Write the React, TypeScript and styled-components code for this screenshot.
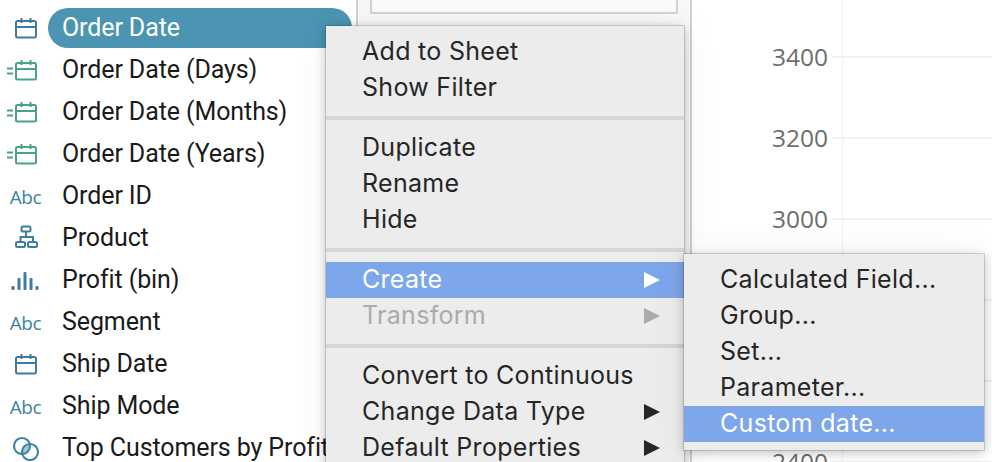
import React from "react";
import styled, { createGlobalStyle } from "styled-components";

const Global = createGlobalStyle`
  html, body { margin: 0; padding: 0; background: #fff; overflow: hidden; }
  #root { width: 992px; height: 462px; }
`;

const Page = styled.div`
  position: relative;
  width: 992px;
  height: 462px;
  overflow: hidden;
  display: flex;
  background: #fff;
`;

const Sidebar = styled.div`
  width: 356px;
  flex: none;
  display: flex;
  flex-direction: column;
  padding-top: 7px;
  box-sizing: border-box;
`;

const Row = styled.div`
  height: 42px;
  flex: none;
  display: flex;
  align-items: center;
`;

const IconSlot = styled.div`
  width: 48px;
  height: 42px;
  flex: none;
  box-sizing: border-box;
  padding: 0 10px 2px 0;
  display: flex;
  align-items: center;
  justify-content: flex-end;
  color: #3d7d9e;
`;

const AbcLabel = styled.span`
  font-family: "Open Sans", "Liberation Sans", sans-serif;
  font-size: 19px;
  letter-spacing: -0.5px;
  color: #3f81a3;
  margin: 4px -3px 0 0;
`;

const FieldName = styled.div<{ $selected?: boolean }>`
  flex: 1;
  height: 40px;
  display: flex;
  align-items: center;
  padding: 0 0 2px 14px;
  box-sizing: border-box;
  border-radius: 20px;
  white-space: nowrap;
  font-family: Roboto, "Liberation Sans", sans-serif;
  font-size: 25px;
  letter-spacing: -0.1px;
  color: ${(p) => (p.$selected ? "#fff" : "#1a1a1a")};
  background: ${(p) => (p.$selected ? "#4b95b2" : "transparent")};
  margin-right: ${(p) => (p.$selected ? "4px" : "0")};
`;

const Middle = styled.div`
  width: 336px;
  flex: none;
  box-sizing: border-box;
  background: #f8f8f8;
  border-left: 2px solid #d2d2d2;
  border-right: 2px solid #d2d2d2;
  padding: 0 12px;
`;

const DropCard = styled.div`
  height: 14px;
  box-sizing: border-box;
  background: #fbfbfb;
  border: 2px solid #d2d2d2;
  border-top: none;
`;

const Chart = styled.div`
  flex: 1;
  position: relative;
  display: flex;
  flex-direction: column;
  padding-top: 16px;
  background: #fff;
`;

const AxisLine = styled.div`
  position: absolute;
  left: 150px;
  top: 0;
  bottom: 0;
  width: 1px;
  background: #f1f1f1;
`;

const AxisRow = styled.div`
  height: 81px;
  flex: none;
  display: flex;
  align-items: center;
`;

const AxisLabel = styled.div`
  width: 136px;
  flex: none;
  text-align: right;
  font-family: "Open Sans", "Liberation Sans", sans-serif;
  font-size: 24.500px;
  color: #6e6e6e;
`;

const GridLine = styled.div`
  flex: 1;
  height: 2px;
  margin-left: 4px;
  background: #f2f2f2;
`;

const Item = styled.div<{ $active?: boolean; $disabled?: boolean }>`
  height: 36px;
  flex: none;
  box-sizing: border-box;
  display: flex;
  align-items: center;
  justify-content: space-between;
  padding: 0 24px ${(p) => (p.$active || p.$disabled ? "3px" : "1px")} 36px;
  white-space: nowrap;
  font-family: Inter, "Liberation Sans", sans-serif;
  font-size: 25px;
  letter-spacing: 0.3px;
  color: ${(p) => (p.$active ? "#fff" : p.$disabled ? "#ababab" : "#262626")};
  background: ${(p) => (p.$active ? "#7ea6ea" : "transparent")};
`;

const Menu = styled.div`
  position: absolute;
  left: 326px;
  top: 26px;
  width: 358px;
  height: 460px;
  box-sizing: border-box;
  background: #ececec;
  box-shadow: 0 0 0 1px rgba(0, 0, 0, 0.14), 0 2px 10px rgba(0, 0, 0, 0.24), 0 0 40px rgba(0, 0, 0, 0.05);
  padding-top: 7px;
  display: flex;
  flex-direction: column;
`;

const SubMenu = styled(Menu)`
  left: 684px;
  top: 254px;
  width: 300px;
  height: 196px;
  padding-top: 8px;

  ${Item} {
    padding-bottom: 3px;
  }
`;

const Arrow = styled.span<{ $active?: boolean; $disabled?: boolean }>`
  width: 0;
  height: 0;
  margin-top: 3px;
  border-top: 8px solid transparent;
  border-bottom: 8px solid transparent;
  border-left: 16px solid ${(p) => (p.$active ? "#fff" : p.$disabled ? "#ababab" : "#262626")};
`;

const Separator = styled.div<{ $before: number; $after: number }>`
  height: 4px;
  flex: none;
  background: #d6d6d6;
  margin: ${(p) => p.$before}px 0 ${(p) => p.$after}px;
`;

const Calendar = ({ color }: { color: string }) => (
  <svg width="24" height="24" viewBox="0 0 24 24" fill="none" stroke={color} strokeWidth="2">
    <rect x="2" y="6" width="20" height="16.500" rx="1.500" />
    <path d="M2 12h20M7.500 3v5M16.500 3v5" />
  </svg>
);

const DiscreteDate = () => (
  <svg width="32" height="24" viewBox="0 0 32 24" fill="none" stroke="#4aa482" strokeWidth="2">
    <rect x="10" y="6" width="20" height="16.500" rx="1.500" />
    <path d="M10 12h20M15.500 3v5M24.500 3v5M1 11.500h6M1 16.500h6" />
  </svg>
);

const Hierarchy = () => (
  <svg width="24" height="24" viewBox="0 0 24 24" fill="none" stroke="#3d7d9e" strokeWidth="2">
    <rect x="7.500" y="1.500" width="9" height="5" rx="1.500" />
    <rect x="2" y="17" width="9" height="5" rx="1.500" />
    <rect x="14" y="17" width="9" height="5" rx="1.500" />
    <path d="M12 6.500v5.500M6.500 17v-5h12.500v5" />
  </svg>
);

const BinsSvg = styled.svg`
  margin-right: -2px;
`;

const Bins = () => (
  <BinsSvg width="30" height="22" viewBox="0 0 30 22" fill="#3d7d9e">
    <rect x="1.500" y="18" width="3" height="4" rx="1" />
    <rect x="7.500" y="10" width="3" height="12" rx="1" />
    <rect x="13.500" y="4" width="3" height="18" rx="1" />
    <rect x="19.500" y="10" width="3" height="12" rx="1" />
    <rect x="25.500" y="18" width="3" height="4" rx="1" />
  </BinsSvg>
);

const SetSvg = styled.svg`
  margin-right: -2px;
`;

const SetIcon = () => (
  <SetSvg width="28" height="28" viewBox="0 0 28 28" fill="none" stroke="#3d85a5" strokeWidth="2.200">
    <defs>
      <clipPath id="set-overlap">
        <circle cx="10" cy="13" r="8" />
      </clipPath>
    </defs>
    <circle cx="18" cy="19" r="8" fill="#a9cbd8" stroke="none" clipPath="url(#set-overlap)" />
    <circle cx="10" cy="13" r="8" />
    <circle cx="18" cy="19" r="8" />
  </SetSvg>
);

type Field = { name: string; icon: React.ReactNode; selected?: boolean };

const abc = <AbcLabel>Abc</AbcLabel>;
const fields: Field[] = [
  { name: "Order Date", icon: <Calendar color="#3d7d9e" />, selected: true },
  { name: "Order Date (Days)", icon: <DiscreteDate /> },
  { name: "Order Date (Months)", icon: <DiscreteDate /> },
  { name: "Order Date (Years)", icon: <DiscreteDate /> },
  { name: "Order ID", icon: abc },
  { name: "Product", icon: <Hierarchy /> },
  { name: "Profit (bin)", icon: <Bins /> },
  { name: "Segment", icon: abc },
  { name: "Ship Date", icon: <Calendar color="#3d7d9e" /> },
  { name: "Ship Mode", icon: abc },
  { name: "Top Customers by Profit", icon: <SetIcon /> },
];

const ticks = ["3400", "3200", "3000", "2800", "2600", "2400"];

export default function App() {
  return (
    <Page>
      <Global />
      <Sidebar>
        {fields.map((f) => (
          <Row key={f.name}>
            <IconSlot>{f.icon}</IconSlot>
            <FieldName $selected={f.selected}>{f.name}</FieldName>
          </Row>
        ))}
      </Sidebar>
      <Middle>
        <DropCard />
      </Middle>
      <Chart>
        <AxisLine />
        {ticks.map((t) => (
          <AxisRow key={t}>
            <AxisLabel>{t}</AxisLabel>
            <GridLine />
          </AxisRow>
        ))}
      </Chart>
      <Menu>
        <Item>Add to Sheet</Item>
        <Item>Show Filter</Item>
        <Separator $before={11} $after={9} />
        <Item>Duplicate</Item>
        <Item>Rename</Item>
        <Item>Hide</Item>
        <Separator $before={11} $after={10} />
        <Item $active>
          Create
          <Arrow $active />
        </Item>
        <Item $disabled>
          Transform
          <Arrow $disabled />
        </Item>
        <Separator $before={10} $after={9} />
        <Item>Convert to Continuous</Item>
        <Item>
          Change Data Type
          <Arrow />
        </Item>
        <Item>
          Default Properties
          <Arrow />
        </Item>
      </Menu>
      <SubMenu>
        <Item>Calculated Field...</Item>
        <Item>Group...</Item>
        <Item>Set...</Item>
        <Item>Parameter...</Item>
        <Item $active>Custom date...</Item>
      </SubMenu>
    </Page>
  );
}
